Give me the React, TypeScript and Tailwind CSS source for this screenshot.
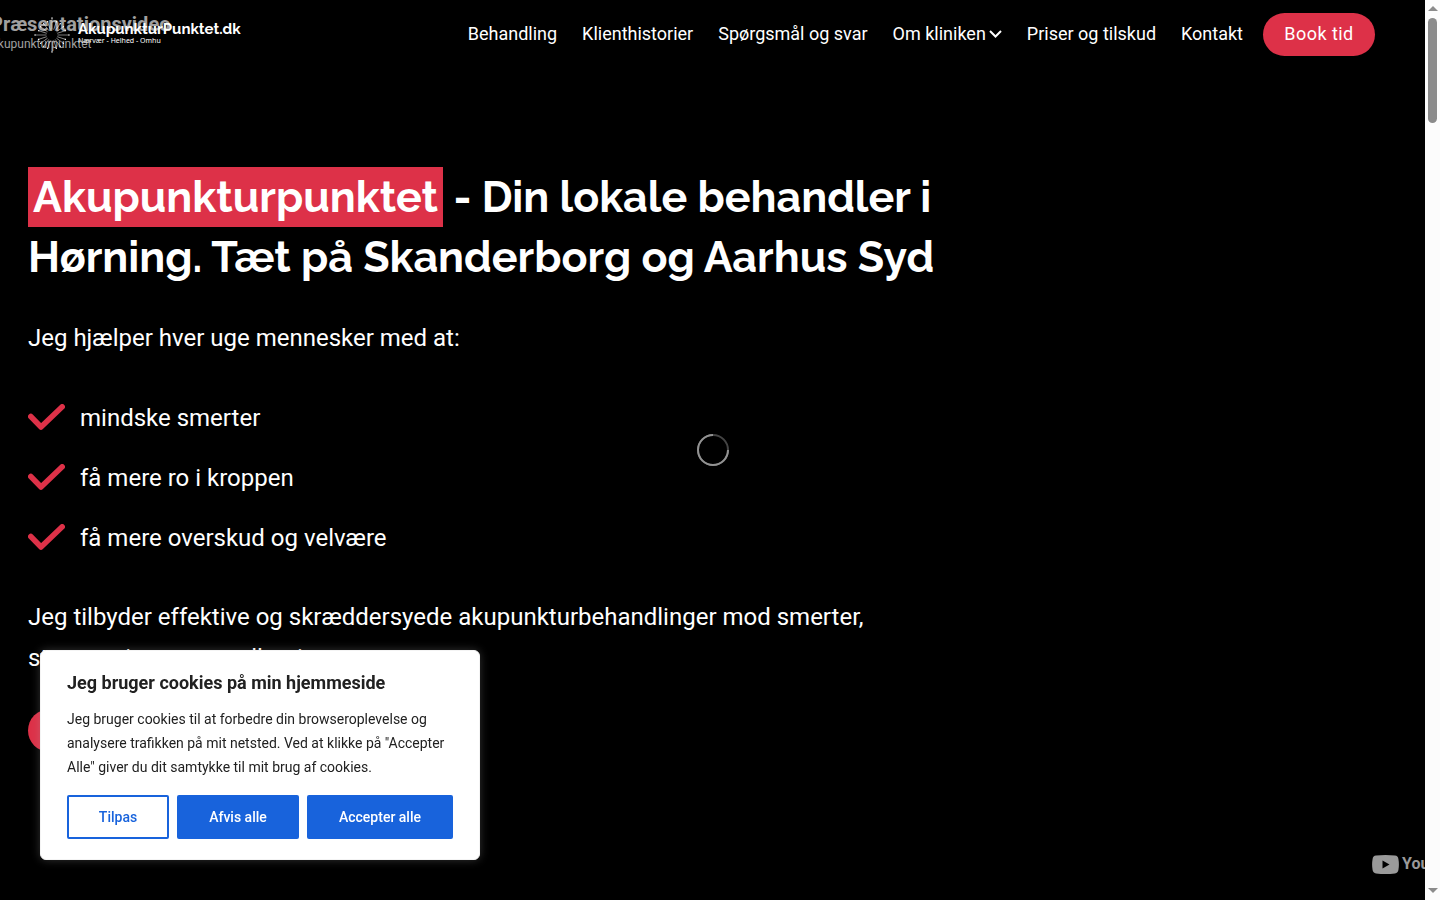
import React from 'react';

const navItems = [
  { label: 'Behandling' },
  { label: 'Klienthistorier' },
  { label: 'Spørgsmål og svar' },
  { label: 'Om kliniken', hasMenu: true },
  { label: 'Priser og tilskud' },
  { label: 'Kontakt' },
];

const benefits = ['mindske smerter', 'få mere ro i kroppen', 'få mere overskud og velvære'];

const rays = Array.from({ length: 20 }, (_, i) => i * 18);

const LogoMark = () => (
  <svg viewBox="0 0 36 36" className="size-9 shrink-0" fill="none" stroke="#fff">
    {rays.map((angle, i) => (
      <g key={angle} transform={`rotate(${angle} 18 18)`}>
        <path d={i % 5 === 0 ? 'M18 12.500V1' : 'M18 12.500V4'} strokeWidth="0.6" opacity="0.8" />
        <circle cx="18" cy={i % 5 === 0 ? 1 : 4} r="0.7" fill="#fff" stroke="none" />
      </g>
    ))}
  </svg>
);

const Header = () => (
  <header className="relative z-10 flex h-[69px] items-center justify-between pl-[34px] pr-[50px]">
    <a href="#" className="flex items-center gap-2 text-white">
      <LogoMark />
      <span className="flex flex-col pb-1 font-['Raleway','Lato',sans-serif]">
        <span className="text-[15px] font-bold leading-4">AkupunkturPunktet.dk</span>
        <span className="font-['Noto_Sans',sans-serif] text-[7px] leading-2">Nærvær - Helhed - Omhu</span>
      </span>
    </a>
    <nav className="flex items-center gap-5">
      <ul className="flex items-center gap-[25px] pb-0.5 text-[18px]">
        {navItems.map((item) => (
          <li key={item.label}>
            <a href="#" className="flex items-center gap-[3px] whitespace-nowrap">
              {item.label}
              {item.hasMenu && (
                <svg viewBox="0 0 13 8" className="h-2 w-[13px]" fill="none" stroke="currentColor" strokeWidth="2">
                  <path d="M1 1L6.500 6.500L12 1" />
                </svg>
              )}
            </a>
          </li>
        ))}
      </ul>
      <a href="#" className="flex h-[43px] w-28 items-center justify-center rounded-full bg-[#dd3148] pb-0.5 text-[18px] tracking-wide">
        Book tid
      </a>
    </nav>
  </header>
);

const VideoOverlay = () => (
  <>
    <div className="absolute -left-[10px] top-[10px] whitespace-nowrap text-[#a0a0a0]">
      <p className="text-[20px] font-bold leading-7">Præsentationsvideo</p>
      <p className="text-xs leading-3">Akupunkturpunktet</p>
    </div>
    <svg viewBox="0 0 32 32" className="absolute left-1/2 top-1/2 size-8 -translate-x-1/2 -translate-y-1/2" fill="none" strokeWidth="2">
      <circle cx="16" cy="16" r="15" stroke="#444" />
      <path d="M16 1A15 15 0 1 0 31 16" stroke="#929292" />
    </svg>
    <div className="absolute bottom-6 left-full -ml-[53px] flex items-center gap-[3px] text-[#9a9a9a]">
      <svg viewBox="0 0 27 19" className="h-[19px] w-[27px] shrink-0">
        <path
          d="M4 0.600Q13.500 -0.600 23 0.600Q26 1 26.400 4Q27.400 9.500 26.400 15Q26 18 23 18.400Q13.500 19.600 4 18.400Q1 18 0.600 15Q-0.400 9.500 0.600 4Q1 1 4 0.600Z"
          fill="currentColor"
        />
        <path d="M10.500 5.500V13.500L17.500 9.500Z" fill="#000" />
      </svg>
      <span className="text-base font-bold leading-6">YouTube</span>
    </div>
  </>
);

const CookieBanner = () => (
  <section
    aria-label="Cookies"
    className="fixed bottom-10 left-10 z-20 w-[440px] rounded-md border border-[#f4f4f4] bg-white px-[26px] py-5 text-[#212121] shadow-[0_0_10px_#acabab4c]"
  >
    <h2 className="text-[18px] font-bold leading-6">Jeg bruger cookies på min hjemmeside</h2>
    <p className="mt-3 text-sm leading-6">
      Jeg bruger cookies til at forbedre din browseroplevelse og analysere trafikken på mit netsted. Ved at klikke på
      "Accepter Alle" giver du dit samtykke til mit brug af cookies.
    </p>
    <div className="mt-4 flex gap-2 text-sm font-medium text-white">
      <button className="h-11 w-[102px] rounded-xs border-2 border-[#1863dc] text-[#1863dc]">Tilpas</button>
      <button className="h-11 w-[122px] rounded-xs bg-[#1863dc]">Afvis alle</button>
      <button className="h-11 flex-1 rounded-xs bg-[#1863dc]">Accepter alle</button>
    </div>
  </section>
);

const Scrollbar = () => (
  <div aria-hidden="true" className="flex w-[15px] shrink-0 flex-col items-center justify-between bg-[#fcfcfc] pb-[7px] pt-[6px]">
    <div className="flex flex-col items-center gap-[7px]">
      <svg viewBox="0 0 10 5" className="h-[5px] w-[10px]" fill="#8b8b8b">
        <path d="M0 5L5 0L10 5Z" />
      </svg>
      <div className="h-[105px] w-[9px] rounded-full bg-[#8b8b8b]" />
    </div>
    <svg viewBox="0 0 10 5" className="h-[5px] w-[10px]" fill="#8b8b8b">
      <path d="M0 0H10L5 5Z" />
    </svg>
  </div>
);

export default function App() {
  return (
    <div className="flex h-screen overflow-hidden bg-black font-['Roboto',sans-serif] text-white">
      <div className="relative min-w-0 flex-1 overflow-hidden">
        <VideoOverlay />
        <Header />
        <main className="relative max-w-[960px] pl-7 pt-[98px]">
          <h1 className="font-['Raleway','Lato',sans-serif] text-[43px] font-bold leading-[60px]">
            <span className="inline-block bg-[#dd3148] px-[5px]">Akupunkturpunktet</span> - Din lokale behandler i
            <br />
            Hørning. Tæt på Skanderborg og Aarhus Syd
          </h1>
          <p className="mt-[31px] text-2xl leading-10">Jeg hjælper hver uge mennesker med at:</p>
          <ul className="mt-10 flex flex-col gap-5">
            {benefits.map((benefit) => (
              <li key={benefit} className="flex items-center gap-[15px] text-2xl leading-10">
                <svg viewBox="0 0 37 28" className="h-7 w-[37px]" fill="none" stroke="#dd3148" strokeWidth="5.500" strokeLinecap="round" strokeLinejoin="round">
                  <path d="M2.800 12.500L13 23L34.200 2.800" />
                </svg>
                {benefit}
              </li>
            ))}
          </ul>
          <p className="mt-[39px] text-2xl leading-[41px]">
            Jeg tilbyder effektive og skræddersyede akupunkturbehandlinger mod smerter,
            <br />
            stress, migræne og allergi
          </p>
          <a href="#" className="mt-[30px] flex h-[43px] w-28 items-center justify-center rounded-full bg-[#dd3148] pb-0.5 text-[18px] tracking-wide">
            Book tid
          </a>
        </main>
      </div>
      <Scrollbar />
      <CookieBanner />
    </div>
  );
}
